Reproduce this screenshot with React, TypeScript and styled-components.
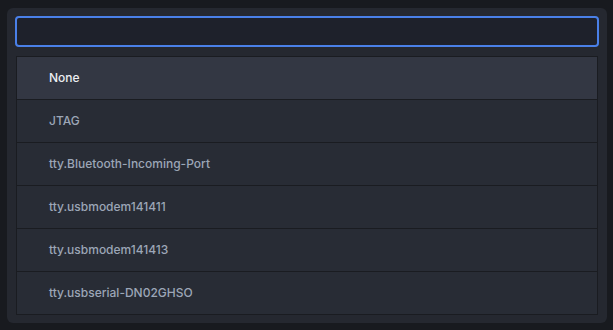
import styled, { createGlobalStyle } from "styled-components";

const GlobalStyle = createGlobalStyle`
  html, body {
    margin: 0;
    padding: 0;
    background: #181a1f;
  }
  body {
    font-family: Inter, "Liberation Sans", Arial, sans-serif;
  }
`

const Screen = styled.div`
  width: 613px;
  height: 330px;
  padding: 8px 6px 7px 7px;
  box-sizing: border-box;
  background: #181a1f;
`

const Panel = styled.div`
  height: 100%;
  box-sizing: border-box;
  padding: 8px 8px 8px 8px;
  background: #252830;
  border-radius: 6px;
  display: flex;
  flex-direction: column;
  gap: 9px;
`

const SearchInput = styled.input`
  height: 31px;
  box-sizing: border-box;
  margin: 0;
  border: 2px solid #4a80e8;
  border-radius: 4px;
  background: #1e212b;
  color: #d7dae0;
  outline: none;
  font: inherit;
  padding: 0 10px;
`

const List = styled.ul`
  list-style: none;
  margin: 0 1px 0 1px;
  padding: 0;
  border: 1px solid #1a1c21;
  background: #282c35;
`

const Item = styled.li<{ $selected?: boolean }>`
  height: 42px;
  box-sizing: border-box;
  display: flex;
  align-items: center;
  padding: 0 0 2px 32px;
  font-size: 12px;
  font-weight: 500;
  color: ${props => props.$selected ? "#eceef2" : "#9ca6b7"};
  background: ${props => props.$selected ? "#333743" : "#282c35"};
  & + & {
    height: 43px;
    border-top: 1px solid #1a1c21;
  }
`

const ports = [
  "None",
  "JTAG",
  "tty.Bluetooth-Incoming-Port",
  "tty.usbmodem141411",
  "tty.usbmodem141413",
  "tty.usbserial-DN02GHSO",
]

export default function App() {
  return (
    <Screen>
      <GlobalStyle />
      <Panel>
        <SearchInput autoFocus />
        <List>
          {ports.map((p, i) => (
            <Item key={p} $selected={i === 0}>{p}</Item>
          ))}
        </List>
      </Panel>
    </Screen>
  )
}
